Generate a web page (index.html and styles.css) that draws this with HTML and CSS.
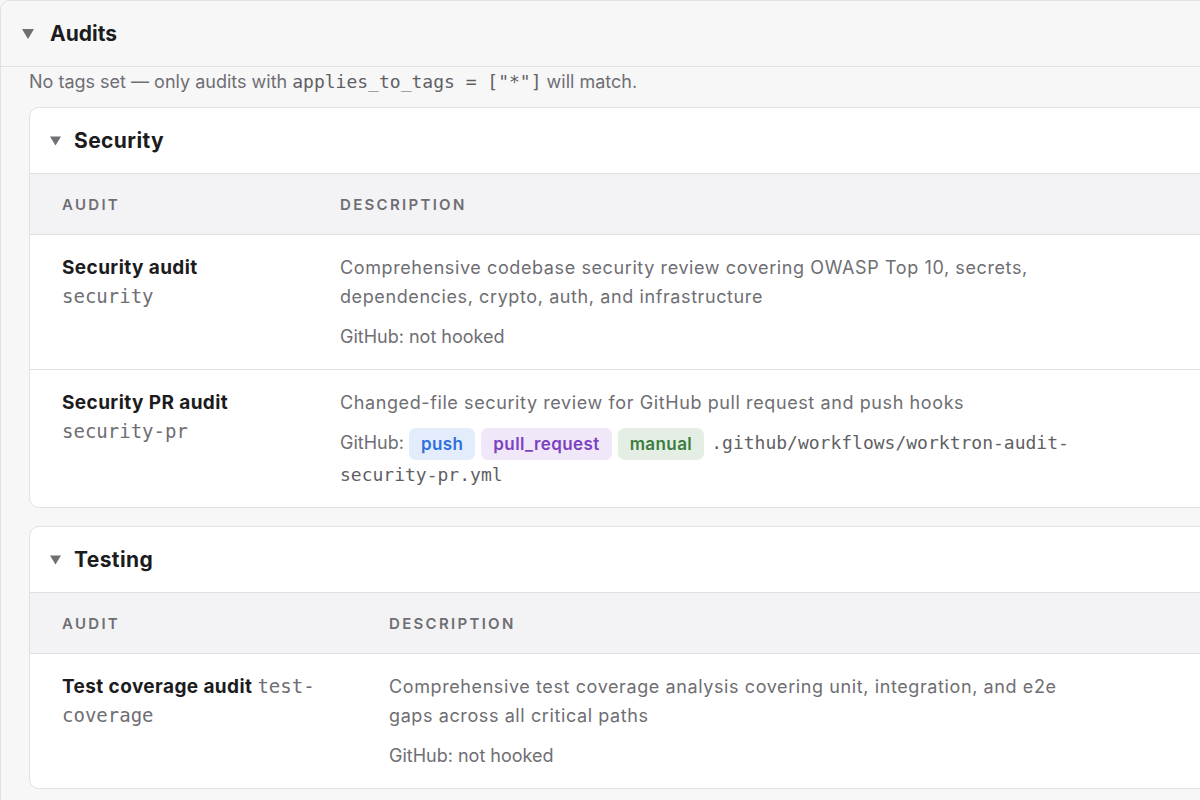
FILE: index.html
```html
<!DOCTYPE html>
<html lang="en">
<head>
<meta charset="utf-8">
<title>Audits</title>
<link rel="stylesheet" href="styles.css">
</head>
<body>
<div class="panel">
  <div class="summary">
    <svg class="caret caret-lg" viewBox="0 0 12 10" aria-hidden="true"><path d="M0 0H12L6 10Z"/></svg>
    <span class="summary-title">Audits</span>
  </div>
  <div class="panel-body">
    <p class="note">No tags set — only audits with <code>applies_to_tags = ["*"]</code> will match.</p>

    <section class="card">
      <div class="card-head">
        <svg class="caret" viewBox="0 0 12 10" aria-hidden="true"><path d="M0 0H12L6 10Z"/></svg>
        <h2 class="card-title">Security</h2>
      </div>
      <table class="audits">
        <colgroup><col class="col-sec-1"><col class="col-sec-2"><col></colgroup>
        <thead>
          <tr><th>Audit</th><th>Description</th><th></th></tr>
        </thead>
        <tbody>
          <tr>
            <td><strong class="name">Security audit</strong> <code class="slug">security</code></td>
            <td>
              <div class="desc">Comprehensive codebase security review covering OWASP Top 10, secrets, dependencies, crypto, auth, and infrastructure</div>
              <div class="meta">GitHub: not hooked</div>
            </td>
            <td></td>
          </tr>
          <tr>
            <td><strong class="name">Security PR audit</strong> <code class="slug">security-pr</code></td>
            <td>
              <div class="desc">Changed-file security review for GitHub pull request and push hooks</div>
              <div class="meta">GitHub: <span class="badge badge-push">push</span><span class="badge badge-pr">pull_request</span><span class="badge badge-manual">manual</span> <code class="path">.github/workflows/worktron-audit-security-pr.yml</code></div>
            </td>
            <td></td>
          </tr>
        </tbody>
      </table>
    </section>

    <section class="card">
      <div class="card-head">
        <svg class="caret" viewBox="0 0 12 10" aria-hidden="true"><path d="M0 0H12L6 10Z"/></svg>
        <h2 class="card-title">Testing</h2>
      </div>
      <table class="audits">
        <colgroup><col class="col-test-1"><col class="col-test-2"><col></colgroup>
        <thead>
          <tr><th>Audit</th><th>Description</th><th></th></tr>
        </thead>
        <tbody>
          <tr>
            <td><strong class="name">Test coverage audit</strong> <code class="slug">test-coverage</code></td>
            <td>
              <div class="desc">Comprehensive test coverage analysis covering unit, integration, and e2e gaps across all critical paths</div>
              <div class="meta">GitHub: not hooked</div>
            </td>
            <td></td>
          </tr>
        </tbody>
      </table>
    </section>
  </div>
</div>
</body>
</html>
```

FILE: styles.css
```css
html, body {
  margin: 0;
  padding: 0;
}
body {
  background: #f7f7f8;
  font-family: Inter, "Noto Sans", "Liberation Sans", sans-serif;
  font-size: 18px;
  line-height: 29px;
  color: #1c1c1e;
  overflow: hidden;
  width: 1200px;
  height: 800px;
}
code {
  font-family: "DejaVu Sans Mono", "Liberation Mono", monospace;
  font-size: 18px;
}
.panel {
  width: 1500px;
  border: 1px solid #e1e1e4;
  border-radius: 10px;
  background: #f7f7f8;
}
.summary {
  height: 65px;
  display: flex;
  align-items: center;
  padding-left: 21px;
  border-bottom: 1px solid #e1e1e4;
}
.caret {
  width: 11px;
  height: 10px;
  fill: #6f6f74;
  flex: none;
}
.caret-lg {
  width: 12px;
  height: 10px;
}
.summary-title {
  margin-left: 16px;
  font-size: 21px;
  font-weight: 700;
  color: #1c1c1e;
}
.panel-body {
  padding: 0 0 20px 28px;
}
.note {
  margin: 0 0 11px 0;
  color: #6e6e73;
}
.note code {
  color: #5f5f64;
}
.card {
  background: #fff;
  border: 1px solid #e1e1e4;
  border-radius: 10px;
  overflow: hidden;
}
.card + .card {
  margin-top: 18px;
}
.card-head {
  height: 65px;
  display: flex;
  align-items: center;
  padding-left: 20px;
  border-bottom: 1px solid #e1e1e4;
}
.card-title {
  margin: 0 0 0 13px;
  font-size: 21px;
  font-weight: 700;
  letter-spacing: 0.4px;
  color: #1c1c1e;
}
.audits {
  width: 100%;
  table-layout: fixed;
  border-collapse: collapse;
}
.col-sec-1 { width: 278px; }
.col-sec-2 { width: 815px; }
.col-test-1 { width: 327px; }
.col-test-2 { width: 766px; }
.audits th {
  height: 60px;
  padding: 0 32px;
  text-align: left;
  background: #f3f3f5;
  border-bottom: 1px solid #e1e1e4;
  font-size: 15px;
  font-weight: 600;
  letter-spacing: 2.3px;
  text-transform: uppercase;
  color: #6e6e73;
}
.audits td {
  padding: 18px 32px;
  vertical-align: top;
}
.audits tbody tr + tr td {
  border-top: 1px solid #e1e1e4;
}
.name {
  font-size: 19px;
  font-weight: 700;
  letter-spacing: 0.4px;
  color: #1c1c1e;
}
.slug {
  font-size: 19px;
  color: #6e6e73;
}
.desc {
  letter-spacing: 0.6px;
  color: #6e6e73;
}
.meta {
  margin-top: 11px;
  color: #6e6e73;
}
.path {
  color: #5f5f64;
}
.badge {
  display: inline-block;
  vertical-align: middle;
  height: 32px;
  line-height: 32px;
  padding: 0 12px;
  margin-right: 6px;
  border-radius: 7px;
  font-size: 17px;
  font-weight: 600;
  letter-spacing: 0.4px;
}
.badge-push {
  background: #e3ecfb;
  color: #2f6fde;
}
.badge-pr {
  background: #f0e7f8;
  color: #7c42c2;
}
.badge-manual {
  margin-right: 2px;
  background: #e4eee4;
  color: #3a7d3e;
}
```
